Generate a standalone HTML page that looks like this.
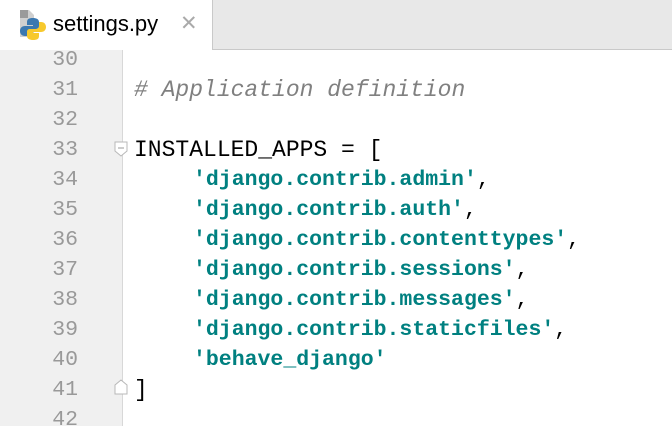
<!DOCTYPE html>
<html><head><style>
body{margin:0;width:672px;height:426px;overflow:hidden;background:#fff;font-family:"Liberation Mono",monospace;position:relative;}
.tabbar{position:absolute;left:0;top:0;width:672px;height:49px;background:#e8e8e8;border-bottom:1px solid #c9c9c9;z-index:5;}
.tab{position:absolute;left:0;top:0;width:212px;height:50px;background:#fff;border-right:1px solid #c9c9c9;}
.tabname{position:absolute;left:53px;top:11px;font-family:"Liberation Sans",sans-serif;font-size:22px;color:#000;}
.x{position:absolute;left:180px;top:11px;font-family:"Liberation Sans",sans-serif;font-size:21px;color:#aaa;}
.gutter{position:absolute;left:0;top:0;width:122px;height:426px;background:#f0f0f0;border-right:1px solid #d8d8d8;}
.ln{position:absolute;left:0;width:78px;text-align:right;font-size:21.5px;color:#999;line-height:30px;}
.code{position:absolute;left:134px;font-size:23px;white-space:pre;color:#000;line-height:30px;}
.i{left:193px;font-size:21.5px;}
.s{color:#008080;font-weight:bold;}
.c{color:#808080;font-style:italic;}
</style></head><body>
<div class="gutter"></div>
<div class="ln" style="top:45px">30</div>
<div class="ln" style="top:75px">31</div><div class="code" style="top:75px"><span class="c"># Application definition</span></div>
<div class="ln" style="top:105px">32</div>
<div class="ln" style="top:135px">33</div><div class="code" style="top:135px">INSTALLED_APPS = [</div>
<div class="ln" style="top:165px">34</div><div class="code i" style="top:165px"><span class="s">'django.contrib.admin'</span>,</div>
<div class="ln" style="top:195px">35</div><div class="code i" style="top:195px"><span class="s">'django.contrib.auth'</span>,</div>
<div class="ln" style="top:225px">36</div><div class="code i" style="top:225px"><span class="s">'django.contrib.contenttypes'</span>,</div>
<div class="ln" style="top:255px">37</div><div class="code i" style="top:255px"><span class="s">'django.contrib.sessions'</span>,</div>
<div class="ln" style="top:285px">38</div><div class="code i" style="top:285px"><span class="s">'django.contrib.messages'</span>,</div>
<div class="ln" style="top:315px">39</div><div class="code i" style="top:315px"><span class="s">'django.contrib.staticfiles'</span>,</div>
<div class="ln" style="top:345px">40</div><div class="code i" style="top:345px"><span class="s">'behave_django'</span></div>
<div class="ln" style="top:375px">41</div><div class="code" style="top:375px">]</div>
<div class="ln" style="top:405px">42</div>
<svg style="position:absolute;left:114px;top:141px" width="14" height="16"><path d="M1 1h12v9l-6 5-6-5z" fill="#fff" stroke="#b8b8b8"/><path d="M4 7h6" stroke="#999"/></svg>
<svg style="position:absolute;left:114px;top:379px" width="14" height="16"><path d="M1 15h12v-9l-6-5-6 5z" fill="#fff" stroke="#b8b8b8"/></svg>
<div class="tabbar"><div class="tab">
<svg style="position:absolute;left:18px;top:10px" width="32" height="30" viewBox="0 0 32 30">
<path d="M2 0h9l5 5v22H2z" fill="#cfcfcf"/><path d="M2 0h8v8H2z" fill="#9a9a9a"/>
<path d="M15 8c-4 0-6 1-6 4v3h6v1H7c-3 0-5 2-5 5s2 5 5 5h2v-4c0-2 2-3 4-3h5c2 0 3-1 3-3v-4c0-3-3-4-6-4z" fill="#3b78b0"/>
<path d="M15 30c4 0 6-1 6-4v-3h-6v-1h8c3 0 5-2 5-5s-2-5-5-5h-2v4c0 2-2 3-4 3h-5c-2 0-3 1-3 3v4c0 3 3 4 6 4z" fill="#f7c92d"/>
</svg>
<div class="tabname">settings.py</div><div class="x">✕</div></div></div>
</body></html>
